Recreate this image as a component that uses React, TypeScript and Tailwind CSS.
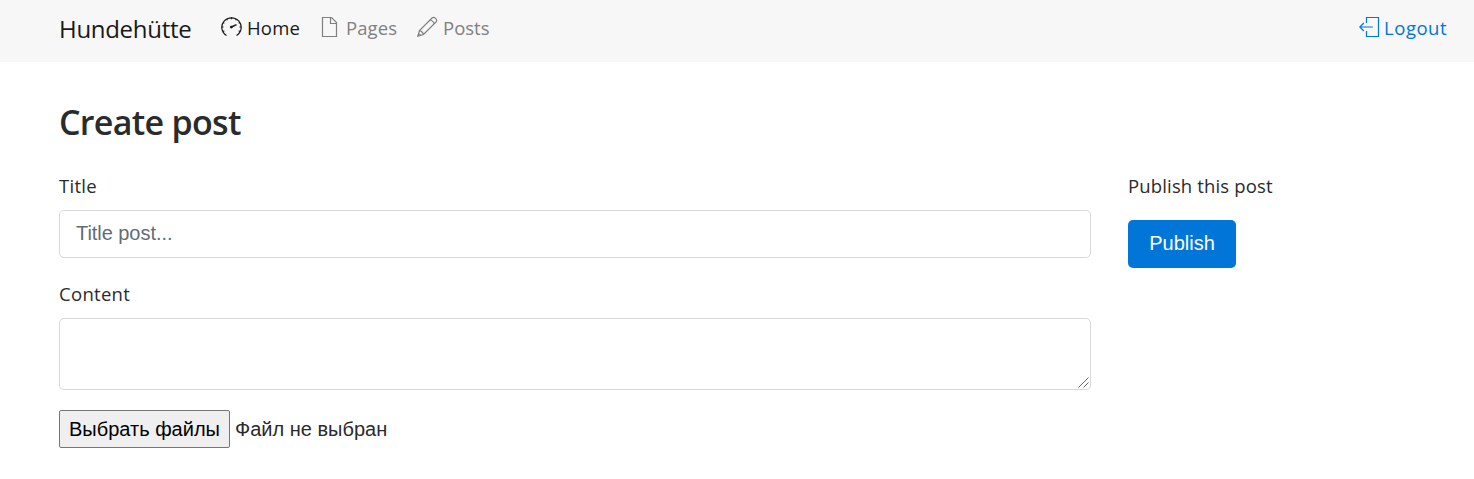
import type { ReactNode } from "react";

function Icon({ children, className = "" }: { children: ReactNode; className?: string }) {
  return (
    <svg viewBox="0 0 21 21" className={"mb-[4px] h-[21px] w-[21px] shrink-0 " + className} fill="none" stroke="currentColor" strokeWidth="1.2">
      {children}
    </svg>
  );
}

export default function App() {
  return (
    <div className="h-[479px] overflow-hidden bg-white font-['Open_Sans','Noto_Sans',sans-serif] text-[18.5px] tracking-[0.15px] text-[#292b2c]">
      <nav className="flex h-[62px] items-start bg-[#f7f7f7] pl-[59px] pr-[27px]">
        <a className="mt-[11px] w-[162px] whitespace-nowrap text-[24px] leading-[36px] tracking-[-0.3px] text-[#191919]">Hundehütte</a>
        <a className="mt-[13px] flex w-[99px] items-center whitespace-nowrap leading-[30px] tracking-[0.2px] text-[#191919]">
          <Icon className="mr-[5px]">
            <path d="M5.500 19.500A9.700 9.500 0 1 1 15.500 19.500" />
            <path d="M10.500 1.500v1.800M5.600 3l.8 1.300M15.400 3l-.8 1.300M2 6.500l1.300.7M19 6.500l-1.300.7M.8 11h1.700M20.200 11h-1.700M2 15.500l1.300-.7M19 15.500l-1.300-.7" />
            <path d="M10.500 11l5-2.400" strokeWidth="1.500" />
            <circle cx="10.300" cy="11.100" r="1.400" fill="currentColor" stroke="none" />
          </Icon>
          <span>Home</span>
        </a>
        <a className="mt-[13px] flex w-[97px] items-center whitespace-nowrap leading-[30px] tracking-[0.1px] text-[#808080]">
          <Icon className="mr-[5px]">
            <path d="M2.500 1.500h9l5 5v14h-14zM10.500 1.500v6h6" />
          </Icon>
          <span>Pages</span>
        </a>
        <a className="mt-[13px] flex items-center whitespace-nowrap leading-[30px] tracking-normal text-[#808080]">
          <Icon className="mr-[5px]">
            <path d="M.8 20.200L2.500 14.500 15 2c1-1 2.300-.9 3.600.4s1.400 2.600.4 3.600L6.500 18.500zM2.500 14.500c1.500.2 3.800 2.500 4 4M13 4c2 .3 3.700 2 4 4M.8 20.200l1-2.700 1.700 1.700z" />
          </Icon>
          <span>Posts</span>
        </a>
        <a className="ml-auto mt-[13px] flex items-center whitespace-nowrap leading-[30px] tracking-[0.5px] text-[#0275d8]">
          <Icon className="mr-[4px]">
            <path d="M7.500 7V1.500h12v19h-12V15M.8 11h13M4.800 7l-4 4 4 4" />
          </Icon>
          <span>Logout</span>
        </a>
      </nav>
      <main className="pl-[59px]">
        <h1 className="pt-[38px] text-[34px] font-semibold leading-[44px] tracking-[-0.7px]"><span>Create post</span></h1>
        <div className="mt-[27px] flex gap-[37px]">
          <form className="w-[1032px]">
            <label className="block h-[39px] leading-[30px] tracking-[0.3px]"><span>Title</span></label>
            <input
              placeholder="Title post..."
              className="block h-12 w-full rounded-[5px] border border-[#d9d9d9] px-4 pb-[1px] font-['Liberation_Sans',sans-serif] text-[20px] tracking-[-0.05px] placeholder:text-[#636c72]"
            />
            <label className="mt-[21px] block h-[39px] leading-[30px] tracking-[0.3px]"><span>Content</span></label>
            <div className="relative">
              <textarea className="block h-[72px] w-full resize-none rounded-[5px] border border-[#d9d9d9]" />
              <svg viewBox="0 0 11 11" className="pointer-events-none absolute bottom-[2px] right-[2px] h-[11px] w-[11px]" fill="none" stroke="#555" strokeWidth="0.9">
                <path d="M.5 10.500l10-10M5.500 10.500l5-5" />
              </svg>
            </div>
            <div className="mt-5 flex h-[38px] items-center font-['Liberation_Sans',sans-serif] text-[20px] tracking-normal">
              <button type="button" className="h-[38px] w-[171px] whitespace-nowrap rounded-[2px] border border-[#767676] bg-[#efefef] text-black">Выбрать файлы</button>
              <span className="ml-[5px]">Файл не выбран</span>
            </div>
          </form>
          <aside>
            <p className="leading-[30px]"><span>Publish this post</span></p>
            <button className="mt-[19px] h-12 w-[108px] rounded-[5px] bg-[#0275d8] pb-[2px] font-['Liberation_Sans',sans-serif] text-[20px] tracking-normal text-white">Publish</button>
          </aside>
        </div>
      </main>
    </div>
  );
}
